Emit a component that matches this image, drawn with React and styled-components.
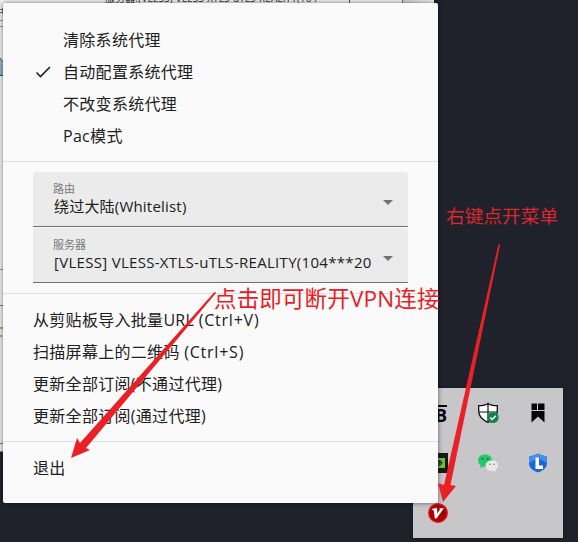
import React from "react";
import styled, { createGlobalStyle } from "styled-components";

const Global = createGlobalStyle`
  * { box-sizing: border-box; }
  body {
    margin: 0;
    overflow: hidden;
    font-family: "Open Sans", "Noto Sans CJK SC", sans-serif;
  }
`;

const Desktop = styled.main`
  position: relative;
  width: 578px;
  height: 542px;
  overflow: hidden;
  background: #1f222b;
`;

const BackWindow = styled.section`
  position: absolute;
  left: 0;
  top: 0;
  width: 434px;
  height: 452px;
  overflow: hidden;
  background: #f2f2f2;
  border-bottom: 1px solid #888;
`;

const StatusLine = styled.div`
  display: flex;
  height: 4px;
  padding-left: 105px;
`;

const StatusText = styled.div`
  width: 245px;
  height: 4px;
  border-right: 1px solid #555;
  font-size: 10px;
  line-height: 16px;
  letter-spacing: 0.1px;
  white-space: nowrap;
  color: #333;
  span { display: block; margin-top: -10px; }
`;

const StatusEnd = styled.div`
  width: 53px;
  height: 4px;
  border-right: 1px solid #777;
`;

const StatusShade = styled.div`
  flex: 1;
  background: linear-gradient(90deg, #cfcfcf, #f4f4f4);
`;

const EdgeDetails = styled.svg`
  position: absolute;
  left: 0;
  top: 0;
`;

const Menu = styled.nav`
  position: absolute;
  left: 3px;
  top: 3px;
  width: 435px;
  height: 500px;
  border-radius: 2px;
  background: #fafafa;
  box-shadow: 0 0 5px rgba(0, 0, 0, 0.55);
  color: #202020;
`;

const Group = styled.div`
  padding: ${(p) => p.$pad};
  border-bottom: ${(p) => (p.$last ? "0" : "1px solid #dcdfdf")};
`;

const Item = styled.div`
  display: flex;
  align-items: center;
  height: 32px;
  padding-left: 30px;
  font-size: 16px;
  line-height: 32px;
  letter-spacing: 0.3px;
  white-space: pre;
`;

const Shortcut = styled.span`
  letter-spacing: 0.78px;
`;

const CheckSlot = styled.span`
  display: flex;
  width: 30px;
  height: 20px;
  align-items: center;
`;

const Select = styled.div`
  display: flex;
  justify-content: space-between;
  width: 375px;
  height: 55px;
  margin: 0 0 1px 30px;
  padding: 0 15px 0 20px;
  border-radius: 4px 4px 0 0;
  border-bottom: 1px solid #707070;
  background: #ebebeb;
`;

const Label = styled.div`
  margin-top: 9px;
  font-size: 11px;
  line-height: 16px;
  color: #777;
`;

const Value = styled.div`
  margin-top: -1px;
  padding-left: 1px;
  font-size: 15px;
  line-height: 20px;
  letter-spacing: ${(p) => p.$track};
  white-space: nowrap;
`;

const Caret = styled.svg`
  margin-top: 28px;
`;

const Tray = styled.aside`
  position: absolute;
  left: 413px;
  top: 388px;
  display: grid;
  grid-template-columns: repeat(3, 50px);
  grid-auto-rows: 50px;
  width: 150px;
  height: 150px;
  background: #c7c7c9;
  box-shadow: 0 0 4px rgba(0, 0, 0, 0.3);
`;

const TrayCell = styled.div`
  display: flex;
  align-items: center;
  justify-content: center;
`;

const LetterIcon = styled.span`
  width: 10px;
  height: 17px;
  margin-left: 8px;
  border-top: 2px solid #080808;
  font: 700 18px/16px "Open Sans", sans-serif;
  text-indent: -2px;
  color: #080808;
`;

const Note = styled.div`
  position: absolute;
  left: ${(p) => p.$x}px;
  top: ${(p) => p.$y}px;
  font-size: ${(p) => p.$size}px;
  line-height: 28px;
  letter-spacing: ${(p) => p.$track || 0}px;
  white-space: nowrap;
  color: ${(p) => p.$color};
`;

const Arrows = styled.svg`
  position: absolute;
  left: 0;
  top: 0;
`;

const modes = ["清除系统代理", "自动配置系统代理", "不改变系统代理", "Pac模式"];
const actions = [
  { text: "从剪贴板导入批量URL ", shortcut: "(Ctrl+V)" },
  { text: "扫描屏幕上的二维码 ", shortcut: "(Ctrl+S)" },
  { text: "更新全部订阅(不通过代理)" },
  { text: "更新全部订阅(通过代理)" },
];

function SelectBox({ label, value, track }) {
  return (
    <Select>
      <div>
        <Label>{label}</Label>
        <Value $track={track}>{value}</Value>
      </div>
      <Caret width="10" height="5" viewBox="0 0 10 5">
        <path d="M0 0H10L5 5Z" fill="#717171" />
      </Caret>
    </Select>
  );
}

function ShieldIcon() {
  return (
    <svg width="22" height="22" viewBox="0 0 22 22">
      <path d="M11 1.4C9 3 5 3.7 1.7 3.7V9c0 5.5 4 9 9.3 11.3C16.3 18 20.3 14.5 20.3 9V3.7C17 3.7 13 3 11 1.4Z" fill="#fff" stroke="#101010" strokeWidth="1.3" />
      <path d="M11 1.5V20M1.7 10H20" stroke="#101010" strokeWidth="1.2" />
      <circle cx="16" cy="15.5" r="5.6" fill="#128348" />
      <path d="M13.2 15.5l2 2 3.700-3.800" fill="none" stroke="#fff" strokeWidth="1.4" />
    </svg>
  );
}

function RibbonIcon() {
  return (
    <svg width="14" height="20" viewBox="0 0 14 20">
      <path d="M0.500 0.500H13.500V19.500L7 13.500L0.500 19.500Z" fill="#050505" />
      <path d="M6.500 0V8M0 7.500H14" stroke="#c7c7c9" strokeWidth="1" />
    </svg>
  );
}

function GpuIcon() {
  return (
    <svg width="20" height="20" viewBox="0 0 20 20">
      <path d="M0 0H20V20H0Z" fill="#151a16" />
      <path d="M3 5H17V15H3Z" fill="#78b943" />
      <path d="M6 10C9 6 12 7 14 10C12 13 9 14 6 10ZM9 10C11 8 12 9 12 10C11 12 10 11 9 10" fill="none" stroke="#18331a" strokeWidth="1.2" />
    </svg>
  );
}

function WeChatIcon() {
  return (
    <svg width="22" height="20" viewBox="0 0 22 20">
      <path d="M8 1.500C3.500 1.500 1 4 1 7.500c0 2.200 1.200 3.800 2.700 4.900L3 15l3-1.500c5 1 9-1.500 9-6 0-3.500-2.500-6-7-6Z" fill="#25c96a" />
      <path d="M15 7.500c-4 0-6.400 2.200-6.400 5.200s2.700 5.200 6.400 5.200l1.400-.2 2.600 1.300-.6-2.200c1.600-1 2.600-2.400 2.600-4.100 0-3-2.200-5.200-6-5.200Z" fill="#e9e9e9" />
      <g fill="#146e3e"><circle cx="5.500" cy="5.700" r="1" /><circle cx="10.700" cy="5.700" r="1" /></g>
      <g fill="#777"><circle cx="12.800" cy="11.200" r=".8" /><circle cx="17" cy="11.200" r=".8" /></g>
    </svg>
  );
}

function LenovoIcon() {
  return (
    <svg width="20" height="20" viewBox="0 0 20 20">
      <path d="M10 .5C7.500 2 4 3 1 3.200V10c0 5 4 7.500 9 9.500 5-2 9-4.500 9-9.500V3.200C16 3 12.500 2 10 .5Z" fill="#1768dc" />
      <path d="M10 .5C7.500 2 4 3 1 3.200V10l9-5 9 5V3.200C16 3 12.500 2 10 .5Z" fill="#438ef2" />
      <path d="M7.500 4.500h3.500v8H15V16H7.500Z" fill="#fff" />
    </svg>
  );
}

function VIcon() {
  return (
    <svg width="20" height="20" viewBox="0 0 20 20">
      <circle cx="10" cy="10" r="9.400" fill="#a80008" stroke="#ed2020" strokeWidth="1.2" />
      <path d="M3.500 6L9 4.800 9.300 10.500 12 6.500 11.200 5.500 16 5 8.500 15.500 6.800 15.500 5.900 8Z" fill="#fff" />
    </svg>
  );
}

export default function App() {
  return (
    <>
      <Global />
      <Desktop>
        <BackWindow>
          <StatusLine>
            <StatusText><span>服务器:[VLESS] VLESS-XTLS-uTLS-REALITY(104</span></StatusText>
            <StatusEnd />
            <StatusShade />
          </StatusLine>
          <EdgeDetails width="4" height="452" viewBox="0 0 4 452">
            <path d="M0 20.500H4M0 26.500H4M0 269.500H4" stroke="#999" />
            <path d="M0 9.500H3M0 12.500H3M2.500 8V14" stroke="#777" />
            <path d="M0 58L3 64V76H0" fill="#8db4c6" />
            <path d="M0 58L3 62M0 75.500H3" stroke="#244b83" />
            <path d="M0 305.500H4" stroke="#777" />
            <path d="M0 306H4V452H0Z" fill="#eee" />
            <path d="M0 328H3M0 336H2" stroke="#b9a55a" strokeWidth="2" />
            <path d="M0 443.500H4" stroke="#777" />
          </EdgeDetails>
        </BackWindow>

        <Tray>
          <TrayCell><LetterIcon>B</LetterIcon></TrayCell>
          <TrayCell><ShieldIcon /></TrayCell>
          <TrayCell><RibbonIcon /></TrayCell>
          <TrayCell><GpuIcon /></TrayCell>
          <TrayCell><WeChatIcon /></TrayCell>
          <TrayCell><LenovoIcon /></TrayCell>
          <TrayCell><VIcon /></TrayCell>
        </Tray>

        <Menu>
          <Group $pad="21px 0 9px">
            {modes.map((mode, i) => (
              <Item key={mode}>
                <CheckSlot>
                  {i === 1 && (
                    <svg width="18" height="16" viewBox="0 0 18 16">
                      <path d="M3.500 8.500L7.500 12.500L17 3" fill="none" stroke="#222" strokeWidth="1.6" />
                    </svg>
                  )}
                </CheckSlot>
                {mode}
              </Item>
            ))}
          </Group>
          <Group $pad="10px 0 9px">
            <SelectBox label="路由" value="绕过大陆(Whitelist)" track="0.2px" />
            <SelectBox label="服务器" value="[VLESS] VLESS-XTLS-uTLS-REALITY(104***20" track="0.3px" />
          </Group>
          <Group $pad="10px 0 9px">
            {actions.map(({ text, shortcut }) => (
              <Item key={text}>
                {text}
                {shortcut && <Shortcut>{shortcut}</Shortcut>}
              </Item>
            ))}
          </Group>
          <Group $pad="10px 0 0" $last>
            <Item>退出</Item>
          </Group>
        </Menu>

        <Note $x={214} $y={285} $size={22.5} $track={0.15} $color="#e62125">点击即可断开VPN连接</Note>
        <Note $x={446} $y={202} $size={18.7} $color="#dc2630">右键点开菜单</Note>
        <Arrows width="578" height="542" viewBox="0 0 578 542">
          <path d="M215.500 292L216 293L86 448L90 450L71 458L77 438L80 443L214 292.500Z" fill="#eb2027" />
          <path d="M498.500 244L500 245L450.500 485L456 486L443 502L438 483L444 485Z" fill="#eb2027" />
        </Arrows>
      </Desktop>
    </>
  );
}
